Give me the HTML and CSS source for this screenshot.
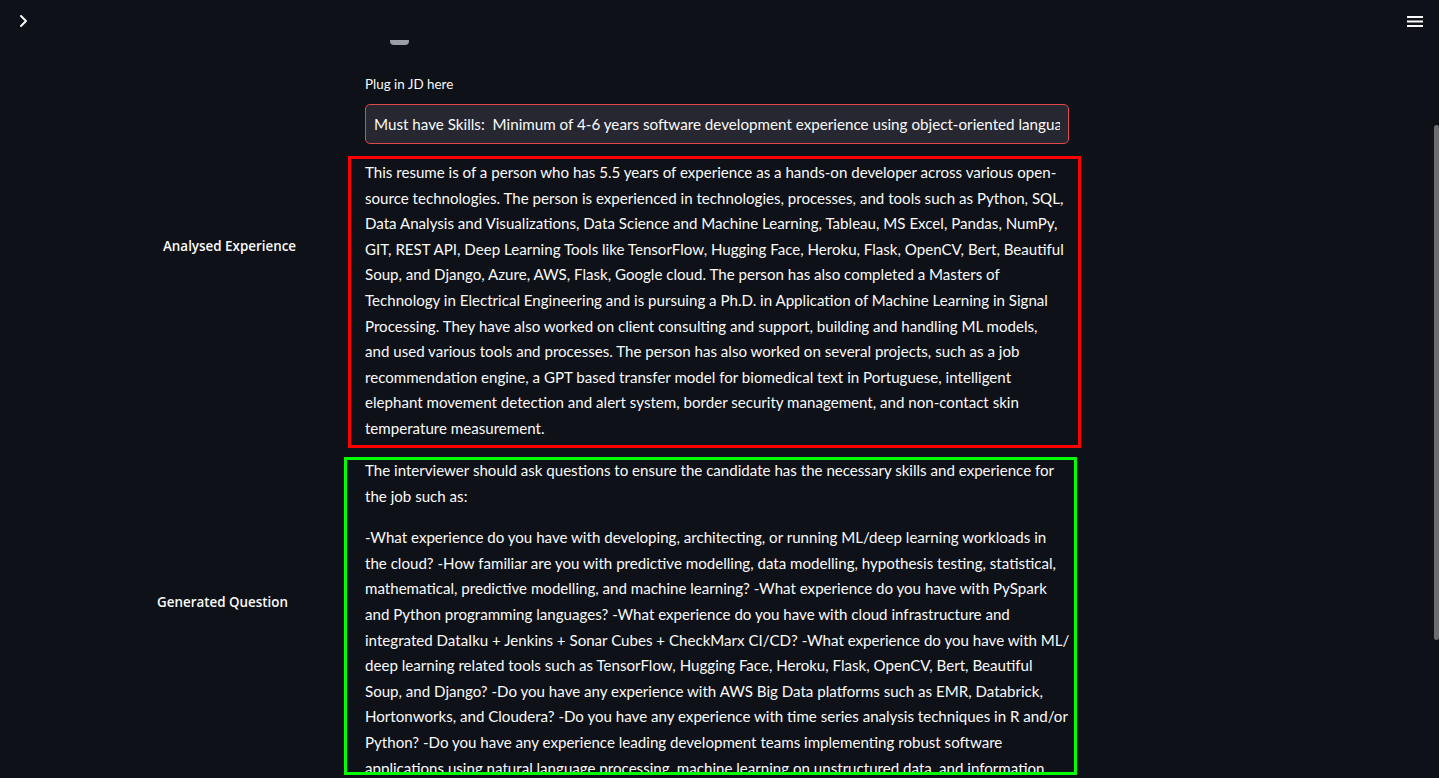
FILE: index.html
```html
<!DOCTYPE html>
<html lang="en">
<head>
<meta charset="utf-8">
<title>Resume Analyser</title>
<link rel="stylesheet" href="styles.css">
</head>
<body>
<header class="toolbar">
  <svg class="icon-chevron" width="12" height="14" viewBox="0 0 12 14"><path d="M3 2 L8 7 L3 12" fill="none" stroke="#fafafa" stroke-width="2" stroke-linecap="round" stroke-linejoin="round"/></svg>
  <svg class="icon-menu" width="16" height="11" viewBox="0 0 16 11"><rect x="0" y="0" width="16" height="2" fill="#fafafa"/><rect x="0" y="4.5" width="16" height="2" fill="#fafafa"/><rect x="0" y="9" width="16" height="2" fill="#fafafa"/></svg>
</header>

<main class="page">
  <div class="row row-top">
    <div class="side"></div>
    <div class="content">
      <div class="partial-widget"></div>
      <label class="field-label" for="jd">Plug in JD here</label>
      <input id="jd" class="jd-input" type="text" readonly value="Must have Skills:  Minimum of 4-6 years software development experience using object-oriented languages such as Python, Java, C++">
    </div>
  </div>

  <div class="row">
    <div class="side"><div class="side-label label-exp">Analysed Experience</div></div>
    <div class="content">
      <div class="box box-red">
        <p>This resume is of a person who has 5.5 years of experience as a hands-on developer across various open-<br>source technologies. The person is experienced in technologies, processes, and tools such as Python, SQL,<br>Data Analysis and Visualizations, Data Science and Machine Learning, Tableau, MS Excel, Pandas, NumPy,<br>GIT, REST API, Deep Learning Tools like TensorFlow, Hugging Face, Heroku, Flask, OpenCV, Bert, Beautiful<br>Soup, and Django, Azure, AWS, Flask, Google cloud. The person has also completed a Masters of<br>Technology in Electrical Engineering and is pursuing a Ph.D. in Application of Machine Learning in Signal<br>Processing. They have also worked on client consulting and support, building and handling ML models,<br>and used various tools and processes. The person has also worked on several projects, such as a job<br>recommendation engine, a GPT based transfer model for biomedical text in Portuguese, intelligent<br>elephant movement detection and alert system, border security management, and non-contact skin<br>temperature measurement.</p>
      </div>
    </div>
  </div>

  <div class="row">
    <div class="side"><div class="side-label label-q">Generated Question</div></div>
    <div class="content">
      <div class="box box-green">
        <p class="first">The interviewer should ask questions to ensure the candidate has the necessary skills and experience for<br>the job such as:</p>
        <p>-What experience do you have with developing, architecting, or running ML/deep learning workloads in<br>the cloud? -How familiar are you with predictive modelling, data modelling, hypothesis testing, statistical,<br>mathematical, predictive modelling, and machine learning? -What experience do you have with PySpark<br>and Python programming languages? -What experience do you have with cloud infrastructure and<br>integrated DataIku + Jenkins + Sonar Cubes + CheckMarx CI/CD? -What experience do you have with ML/<br>deep learning related tools such as TensorFlow, Hugging Face, Heroku, Flask, OpenCV, Bert, Beautiful<br>Soup, and Django? -Do you have any experience with AWS Big Data platforms such as EMR, Databrick,<br>Hortonworks, and Cloudera? -Do you have any experience with time series analysis techniques in R and/or<br>Python? -Do you have any experience leading development teams implementing robust software<br>applications using natural language processing, machine learning on unstructured data, and information<br>retrieval? -What experience do you have with building and deploying ML models in production?</p>
      </div>
    </div>
  </div>
</main>

<div class="scrollbar"></div>
</body>
</html>
```

FILE: styles.css
```css
* { box-sizing: border-box; }

html, body {
  margin: 0;
  height: 778px;
  overflow: hidden;
  background: #0e1117;
  color: #fafafa;
  font-family: "Lato", "Open Sans", sans-serif;
}

.toolbar {
  position: fixed;
  top: 0;
  left: 0;
  right: 0;
  height: 42px;
  display: flex;
  justify-content: space-between;
  align-items: flex-start;
  padding: 14px 16px 0 18px;
  z-index: 2;
}

.icon-menu { margin-top: 2px; }

.page {
  display: flex;
  flex-direction: column;
}

.row {
  display: grid;
  grid-template-columns: 365px 704px;
}

.partial-widget {
  margin: 40px 0 0 25px;
  width: 19px;
  height: 5px;
  background: #9b9ea8;
  border-radius: 0 0 4px 4px;
}

.field-label {
  display: block;
  margin-top: 28px;
  height: 31px;
  font-size: 13.4px;
  line-height: 22px;
}

.jd-input {
  display: block;
  width: 704px;
  height: 40px;
  margin: 0;
  padding: 0 8px;
  background: #262730;
  border: 1px solid #e0484c;
  border-radius: 5px;
  color: #fafafa;
  font-family: inherit;
  font-size: 15.2px;
  outline: none;
}

.side-label {
  font-family: "Open Sans", sans-serif;
  font-weight: 600;
  font-size: 13.4px;
  line-height: 20px;
  color: #fafafa;
}

.label-exp { margin: 92px 0 0 163px; }
.label-q { margin: 144px 0 0 157px; }

.box {
  width: 733px;
  font-size: 15.1px;
  line-height: 25.6px;
  white-space: nowrap;
}

.box p { margin: 0 0 16px 0; }

.box-red {
  margin: 12px 0 0 -17px;
  height: 292px;
  border: 3px solid #ff0000;
  padding: 1px 9px 0 14px;
}

.box-red p { margin: 0; }

.box-green {
  margin: 9px 0 0 -21px;
  height: 318px;
  border: 3px solid #00ff00;
  padding: 0 0 0 18px;
  overflow: hidden;
}

.box-green p.first { margin-top: -2px; }

.scrollbar {
  position: fixed;
  right: 0;
  top: 125px;
  width: 5px;
  height: 515px;
  background: #6c6d70;
  border-radius: 3px;
}
```
